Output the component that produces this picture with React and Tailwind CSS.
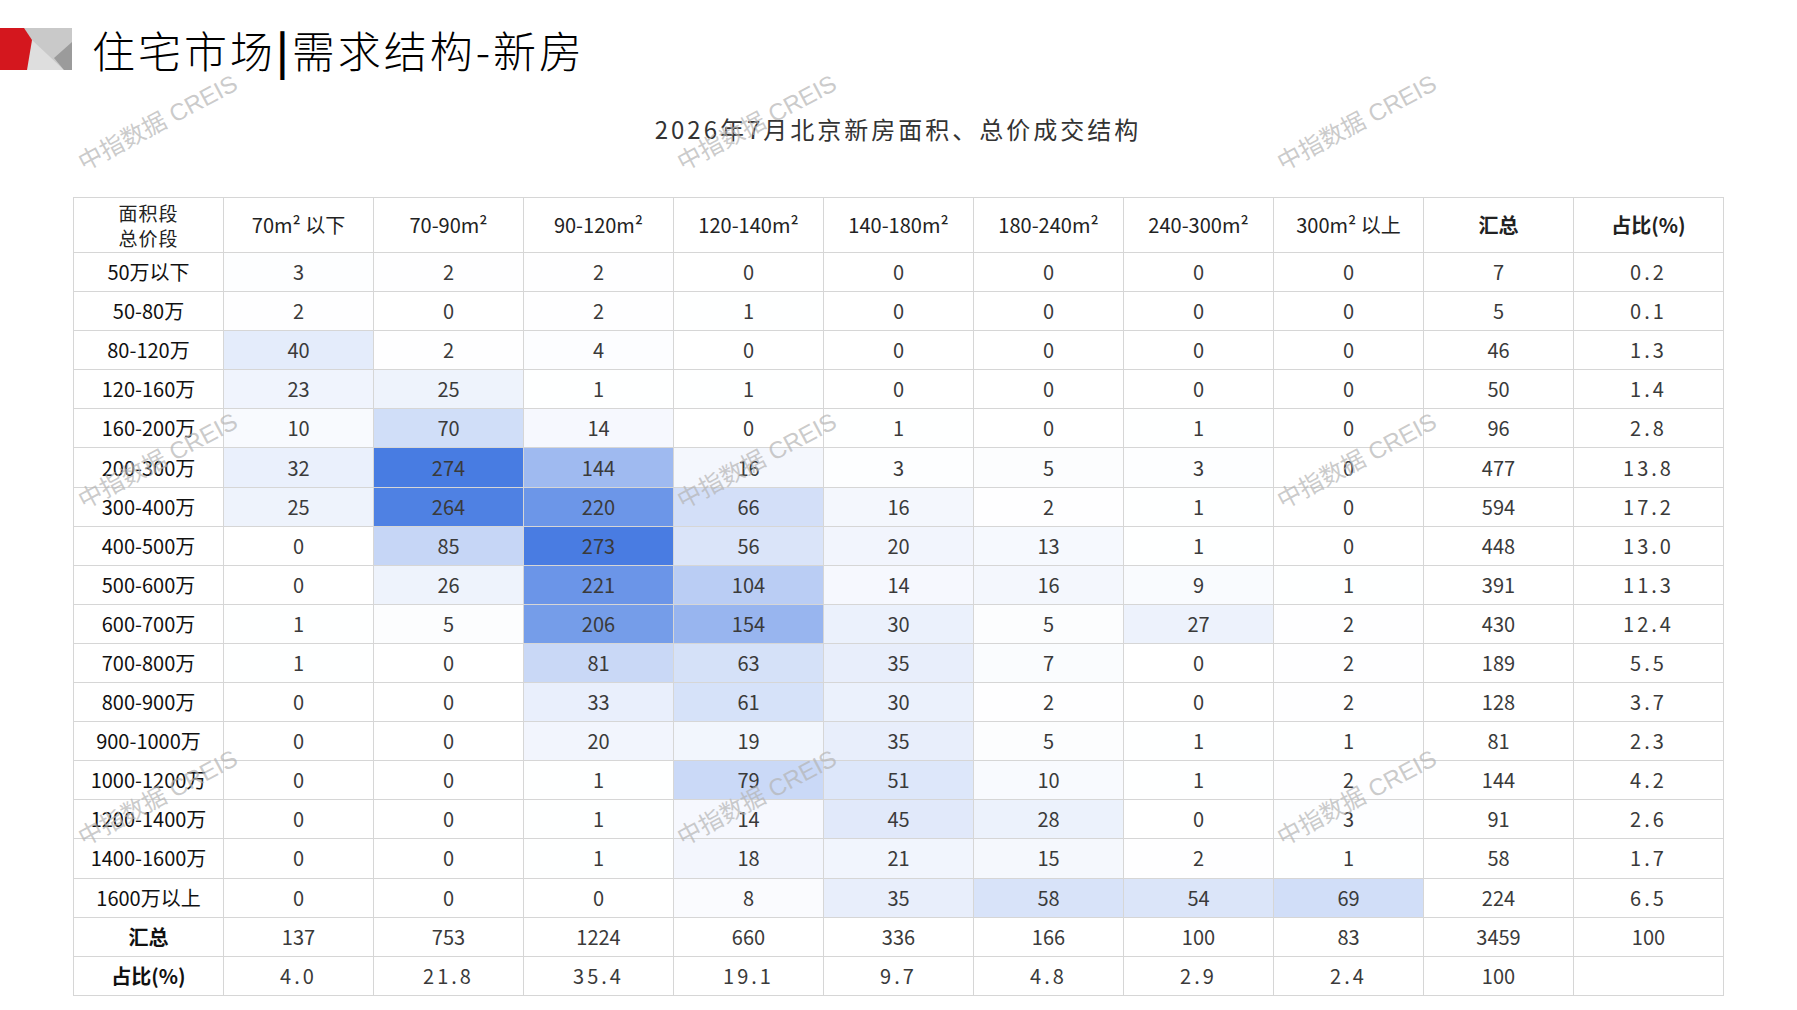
import React from "react";

const cols = ["70m² 以下", "70-90m²", "90-120m²", "120-140m²", "140-180m²", "180-240m²", "240-300m²", "300m² 以上"];

const rows = [
  ["50万以下", [3, 2, 2, 0, 0, 0, 0, 0], 7, "0.2"],
  ["50-80万", [2, 0, 2, 1, 0, 0, 0, 0], 5, "0.1"],
  ["80-120万", [40, 2, 4, 0, 0, 0, 0, 0], 46, "1.3"],
  ["120-160万", [23, 25, 1, 1, 0, 0, 0, 0], 50, "1.4"],
  ["160-200万", [10, 70, 14, 0, 1, 0, 1, 0], 96, "2.8"],
  ["200-300万", [32, 274, 144, 16, 3, 5, 3, 0], 477, "13.8"],
  ["300-400万", [25, 264, 220, 66, 16, 2, 1, 0], 594, "17.2"],
  ["400-500万", [0, 85, 273, 56, 20, 13, 1, 0], 448, "13.0"],
  ["500-600万", [0, 26, 221, 104, 14, 16, 9, 1], 391, "11.3"],
  ["600-700万", [1, 5, 206, 154, 30, 5, 27, 2], 430, "12.4"],
  ["700-800万", [1, 0, 81, 63, 35, 7, 0, 2], 189, "5.5"],
  ["800-900万", [0, 0, 33, 61, 30, 2, 0, 2], 128, "3.7"],
  ["900-1000万", [0, 0, 20, 19, 35, 5, 1, 1], 81, "2.3"],
  ["1000-1200万", [0, 0, 1, 79, 51, 10, 1, 2], 144, "4.2"],
  ["1200-1400万", [0, 0, 1, 14, 45, 28, 0, 3], 91, "2.6"],
  ["1400-1600万", [0, 0, 1, 18, 21, 15, 2, 1], 58, "1.7"],
  ["1600万以上", [0, 0, 0, 8, 35, 58, 54, 69], 224, "6.5"],
];

const totals = [137, 753, 1224, 660, 336, 166, 100, 83];
const shares = ["4.0", "21.8", "35.4", "19.1", "9.7", "4.8", "2.9", "2.4"];

const MAX = 274;
// white -> blue, linear by value
function heat(v) {
  const t = v / MAX;
  const r = Math.round(255 - t * (255 - 72));
  const g = Math.round(255 - t * (255 - 124));
  const b = Math.round(255 - t * (255 - 226));
  return `rgb(${r},${g},${b})`;
}

const font = { fontFamily: "'Noto Sans CJK SC', 'Noto Sans', sans-serif" };

const base = "flex items-center justify-center border-r border-b border-[#d6d6d6]";
const cell = base + " text-[20px] leading-none text-[#3a3a3a]";

function Logo() {
  return (
    <svg width="72" height="42" viewBox="0 0 72 42">
      <rect x="24" y="0" width="48" height="42" fill="#c9c9c9" />
      <polygon points="32,12 64,42 26,42" fill="#dedede" />
      <polygon points="72,14 54,30 64,42 72,42" fill="#9b9b9b" />
      <polygon points="0,0 24,0 32,12 27,42 0,42" fill="#d4171e" />
    </svg>
  );
}

function Watermark({ x, y }) {
  return (
    <div
      className="absolute text-[24px] text-[#b4b4b4]/70 whitespace-nowrap pointer-events-none"
      style={{ left: x, top: y, transform: "translate(-50%,-50%) rotate(-28deg)", fontFamily: "'Liberation Sans', 'Noto Sans CJK SC', sans-serif" }}
    >
      中指数据 CREIS
    </div>
  );
}

export default function App() {
  const marks = [];
  [123, 461, 798].forEach((y) => [158, 757, 1357].forEach((x) => marks.push([x, y])));

  return (
    <div className="relative w-[1797px] h-[1010px] bg-white overflow-hidden" style={font}>
      <div className="flex items-center pt-[28px]">
        <Logo />
        <div className="ml-[20px] text-[43px] leading-[42px] text-black tracking-[3px] font-light">
          住宅市场<span className="font-bold">|</span>需求结构-新房
        </div>
      </div>

      <div className="ml-[73px] w-[1650px] mt-[44px] text-center text-[24px] leading-[30px] tracking-[3px] text-[#333]">
        2026年7月北京新房面积、总价成交结构
      </div>

      <div className="ml-[73px] mt-[53px] grid grid-cols-[repeat(11,150px)] grid-rows-[55px_repeat(19,39.1px)] border-l border-t border-[#d6d6d6] w-max">
        <div className={base + " flex-col text-[19px] leading-[25px] tracking-[1px] text-[#222]"}>
          <span>面积段</span>
          <span>总价段</span>
        </div>
        {cols.map((c) => (
          <div key={c} className={base + " text-[20px] leading-none text-[#222]"}>{c}</div>
        ))}
        <div className={base + " text-[20px] leading-none font-bold text-[#222]"}>汇总</div>
        <div className={base + " text-[20px] leading-none font-bold text-[#222]"}>占比(%)</div>

        {rows.map(([label, vals, sum, pct]) => (
          <React.Fragment key={label}>
            <div className={base + " text-[20px] leading-none text-[#111]"}>{label}</div>
            {vals.map((v, i) => (
              <div key={i} className={cell} style={{ background: heat(v) }}>{v}</div>
            ))}
            <div className={cell}>{sum}</div>
            <div className={cell + " tracking-[3px]"}>{pct}</div>
          </React.Fragment>
        ))}

        <div className={base + " text-[20px] leading-none font-bold text-[#111]"}>汇总</div>
        {totals.map((v, i) => (
          <div key={i} className={cell}>{v}</div>
        ))}
        <div className={cell}>3459</div>
        <div className={cell}>100</div>

        <div className={base + " text-[20px] leading-none font-bold text-[#111]"}>占比(%)</div>
        {shares.map((v, i) => (
          <div key={i} className={cell + " tracking-[3px]"}>{v}</div>
        ))}
        <div className={cell}>100</div>
        <div className={cell}></div>
      </div>

      {marks.map(([x, y], i) => (
        <Watermark key={i} x={x} y={y} />
      ))}
    </div>
  );
}
